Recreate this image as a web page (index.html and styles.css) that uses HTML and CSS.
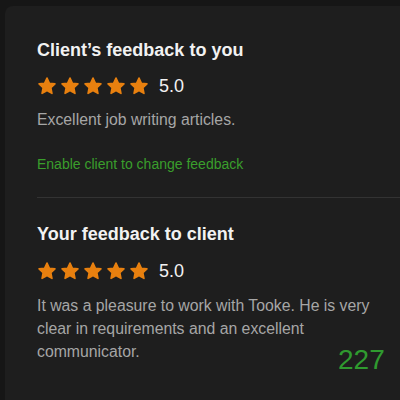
FILE: index.html
```html
<!DOCTYPE html>
<html>
<head>
<meta charset="utf-8">
<link rel="stylesheet" href="styles.css">
</head>
<body>
<div class="card">
  <section class="block">
    <h2 class="title">Client’s feedback to you</h2>
    <div class="rating">
      <span class="stars">
        <svg viewBox="0 0 24 24"><path d="M12 2.5l2.9 6.2 6.6.8-4.9 4.6 1.3 6.7L12 17.5l-5.9 3.3 1.3-6.7-4.9-4.6 6.6-.8z"/></svg>
        <svg viewBox="0 0 24 24"><path d="M12 2.5l2.9 6.2 6.6.8-4.9 4.6 1.3 6.7L12 17.5l-5.9 3.3 1.3-6.7-4.9-4.6 6.6-.8z"/></svg>
        <svg viewBox="0 0 24 24"><path d="M12 2.5l2.9 6.2 6.6.8-4.9 4.6 1.3 6.7L12 17.5l-5.9 3.3 1.3-6.7-4.9-4.6 6.6-.8z"/></svg>
        <svg viewBox="0 0 24 24"><path d="M12 2.5l2.9 6.2 6.6.8-4.9 4.6 1.3 6.7L12 17.5l-5.9 3.3 1.3-6.7-4.9-4.6 6.6-.8z"/></svg>
        <svg viewBox="0 0 24 24"><path d="M12 2.5l2.9 6.2 6.6.8-4.9 4.6 1.3 6.7L12 17.5l-5.9 3.3 1.3-6.7-4.9-4.6 6.6-.8z"/></svg>
      </span>
      <span class="score">5.0</span>
    </div>
    <p class="comment">Excellent job writing articles.</p>
    <a class="link">Enable client to change feedback</a>
  </section>
  <hr class="divider">
  <section class="block second">
    <h2 class="title">Your feedback to client</h2>
    <div class="rating">
      <span class="stars">
        <svg viewBox="0 0 24 24"><path d="M12 2.5l2.9 6.2 6.6.8-4.9 4.6 1.3 6.7L12 17.5l-5.9 3.3 1.3-6.7-4.9-4.6 6.6-.8z"/></svg>
        <svg viewBox="0 0 24 24"><path d="M12 2.5l2.9 6.2 6.6.8-4.9 4.6 1.3 6.7L12 17.5l-5.9 3.3 1.3-6.7-4.9-4.6 6.6-.8z"/></svg>
        <svg viewBox="0 0 24 24"><path d="M12 2.5l2.9 6.2 6.6.8-4.9 4.6 1.3 6.7L12 17.5l-5.9 3.3 1.3-6.7-4.9-4.6 6.6-.8z"/></svg>
        <svg viewBox="0 0 24 24"><path d="M12 2.5l2.9 6.2 6.6.8-4.9 4.6 1.3 6.7L12 17.5l-5.9 3.3 1.3-6.7-4.9-4.6 6.6-.8z"/></svg>
        <svg viewBox="0 0 24 24"><path d="M12 2.5l2.9 6.2 6.6.8-4.9 4.6 1.3 6.7L12 17.5l-5.9 3.3 1.3-6.7-4.9-4.6 6.6-.8z"/></svg>
      </span>
      <span class="score">5.0</span>
    </div>
    <p class="comment">It was a pleasure to work with Tooke. He is very clear in requirements and an excellent communicator.</p>
  </section>
</div>
<div class="counter">227</div>
</body>
</html>
```
FILE: styles.css
```css
html, body {
  margin: 0;
  padding: 0;
  background: #161616;
  width: 400px;
  height: 400px;
  overflow: hidden;
}
body {
  position: relative;
  font-family: "Liberation Sans", Arial, sans-serif;
}
.card {
  margin: 6px 0 0 5px;
  background: #1e1e1e;
  border-radius: 8px 0 0 0;
  height: 394px;
  padding: 32px 0 0 32px;
  box-sizing: border-box;
  overflow: hidden;
}
.block {
  display: flex;
  flex-direction: column;
  align-items: flex-start;
}
.title {
  margin: 0;
  font-size: 18px;
  font-weight: 700;
  color: #f2f2f2;
  line-height: 24px;
}
.rating {
  display: flex;
  align-items: center;
  margin-top: 12px;
  height: 24px;
}
.stars {
  display: flex;
  gap: 3px;
}
.stars svg {
  width: 20px;
  height: 20px;
  fill: #e8800f;
  stroke: #e8800f;
  stroke-width: 2;
  stroke-linejoin: round;
}
.score {
  margin-left: 10px;
  font-size: 18px;
  color: #f2f2f2;
}
.comment {
  margin: 10px 0 0;
  font-size: 15.8px;
  line-height: 23px;
  color: #a6a6a6;
  width: 345px;
}
.second .comment {
  margin-top: 11px;
}
.link {
  margin-top: 24px;
  font-size: 14px;
  line-height: 18px;
  color: #3a9e2c;
}
.divider {
  margin: 24px 0 0;
  border: 0;
  height: 1px;
  background: #333333;
}
.second .title {
  margin-top: 24px;
}
.second .rating {
  margin-top: 13px;
}
.counter {
  position: absolute;
  left: 338px;
  top: 346px;
  font-size: 28px;
  line-height: 28px;
  color: #2f9a2f;
}
```
